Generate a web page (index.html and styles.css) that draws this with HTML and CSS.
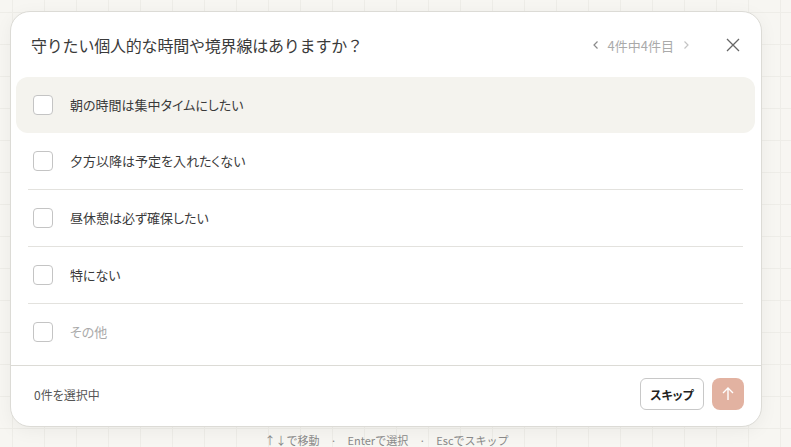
FILE: index.html
```html
<!DOCTYPE html>
<html lang="ja">
<head>
<meta charset="utf-8">
<link rel="stylesheet" href="styles.css">
</head>
<body>
<div class="stage">
  <div class="card">
    <div class="header">
      <div class="title">守りたい個人的な時間や境界線はありますか？</div>
      <div class="nav">
        <svg class="chev" width="10" height="12" viewBox="0 0 10 12"><path d="M6.5 2.5 L3 6 L6.5 9.5" fill="none" stroke="#8a8a8a" stroke-width="1.2"/></svg>
        <span class="count">4件中4件目</span>
        <svg class="chev" width="10" height="12" viewBox="0 0 10 12"><path d="M3.5 2.5 L7 6 L3.5 9.5" fill="none" stroke="#c4c4c4" stroke-width="1.2"/></svg>
      </div>
      <button class="close">
        <svg width="16" height="16" viewBox="0 0 16 16"><path d="M2 2 L14 14 M14 2 L2 14" stroke="#666" stroke-width="1.3" fill="none"/></svg>
      </button>
    </div>
    <div class="list">
      <div class="row active"><span class="box"></span><span class="label">朝の時間は集中タイムにしたい</span></div>
      <div class="row"><span class="box"></span><span class="label">夕方以降は予定を入れたくない</span></div>
      <div class="sep"></div>
      <div class="row"><span class="box"></span><span class="label">昼休憩は必ず確保したい</span></div>
      <div class="sep"></div>
      <div class="row"><span class="box"></span><span class="label">特にない</span></div>
      <div class="sep"></div>
      <div class="row"><span class="box"></span><span class="label other">その他</span></div>
    </div>
    <div class="footer">
      <span class="selected">0件を選択中</span>
      <div class="actions">
        <button class="skip">スキップ</button>
        <button class="submit">
          <svg width="14" height="16" viewBox="0 0 14 16"><path d="M7 14 V2 M2 7 L7 2 L12 7" stroke="#fff" stroke-width="1.4" fill="none"/></svg>
        </button>
      </div>
    </div>
  </div>
  <div class="hint">↑↓で移動　·　Enterで選択　·　Escでスキップ</div>
</div>
</body>
</html>
```
FILE: styles.css
```css
* { box-sizing: border-box; }
html, body { margin: 0; padding: 0; }
body {
  width: 791px;
  height: 447px;
  overflow: hidden;
  background-color: #f7f6f2;
  background-image:
    linear-gradient(to right, #eeede8 1px, transparent 1px),
    linear-gradient(to bottom, #eeede8 1px, transparent 1px);
  background-size: 32px 32px;
  background-position: 12px 12px;
  font-family: "Noto Sans CJK JP", "Noto Sans", sans-serif;
  color: #333;
}
.stage {
  padding: 11px 29px 0 10px;
  display: flex;
  flex-direction: column;
}
.card {
  width: 752px;
  height: 416px;
  background: #fff;
  border: 1px solid #dcdbd6;
  border-radius: 20px;
  box-shadow: 0 4px 18px rgba(0,0,0,0.05);
  display: flex;
  flex-direction: column;
}
.header {
  height: 65px;
  display: flex;
  align-items: center;
  padding: 0 16px 0 20px;
}
.title {
  flex: 1;
  font-size: 16px;
  color: #3a3a3a;
  letter-spacing: -0.2px;
}
.nav {
  display: flex;
  align-items: center;
  gap: 7px;
  margin-right: 30px;
}
.count {
  font-size: 13px;
  color: #aaa;
  padding-top: 1px;
}
.close {
  border: 0;
  background: none;
  padding: 0;
  width: 24px;
  height: 24px;
  display: flex;
  align-items: center;
  justify-content: center;
}
.list {
  padding: 0 6px 5px 5px;
  display: flex;
  flex-direction: column;
  flex: 1;
}
.row {
  height: 56px;
  display: flex;
  align-items: center;
  padding-left: 17px;
  border-radius: 12px;
}
.row.active { background: #f4f3ee; }
.sep {
  height: 1px;
  background: #e3e2de;
  margin: 0 12px;
}
.box {
  width: 20px;
  height: 20px;
  border: 1px solid #c4c4c4;
  border-radius: 4px;
  background: #fff;
  margin-right: 17px;
  flex: none;
}
.label {
  font-size: 13px;
  color: #3a3a3a;
  font-feature-settings: "palt";
  padding-bottom: 2px;
}
.label.other { color: #aaa; }
.footer {
  border-top: 1px solid #dcdbd6;
  height: 61px;
  display: flex;
  align-items: center;
  justify-content: space-between;
  padding: 0 17px 4px 23px;
}
.selected {
  font-size: 12px;
  color: #555;
  font-feature-settings: "palt";
}
.actions { display: flex; gap: 8px; }
.skip {
  height: 32px;
  width: 64px;
  border: 1px solid #c8c8c8;
  border-radius: 6px;
  background: #fff;
  font-family: "Noto Sans CJK JP", sans-serif;
  font-weight: bold;
  font-size: 12px;
  color: #222;
  font-feature-settings: "palt";
  padding: 0;
}
.submit {
  width: 32px;
  height: 32px;
  border: 0;
  border-radius: 8px;
  background: #e2b2a1;
  display: flex;
  align-items: center;
  justify-content: center;
  padding: 0;
}
.hint {
  text-align: center;
  font-size: 11px;
  color: #888;
  margin-top: 5px;
  margin-left: 1px;
  white-space: pre;
}
```
